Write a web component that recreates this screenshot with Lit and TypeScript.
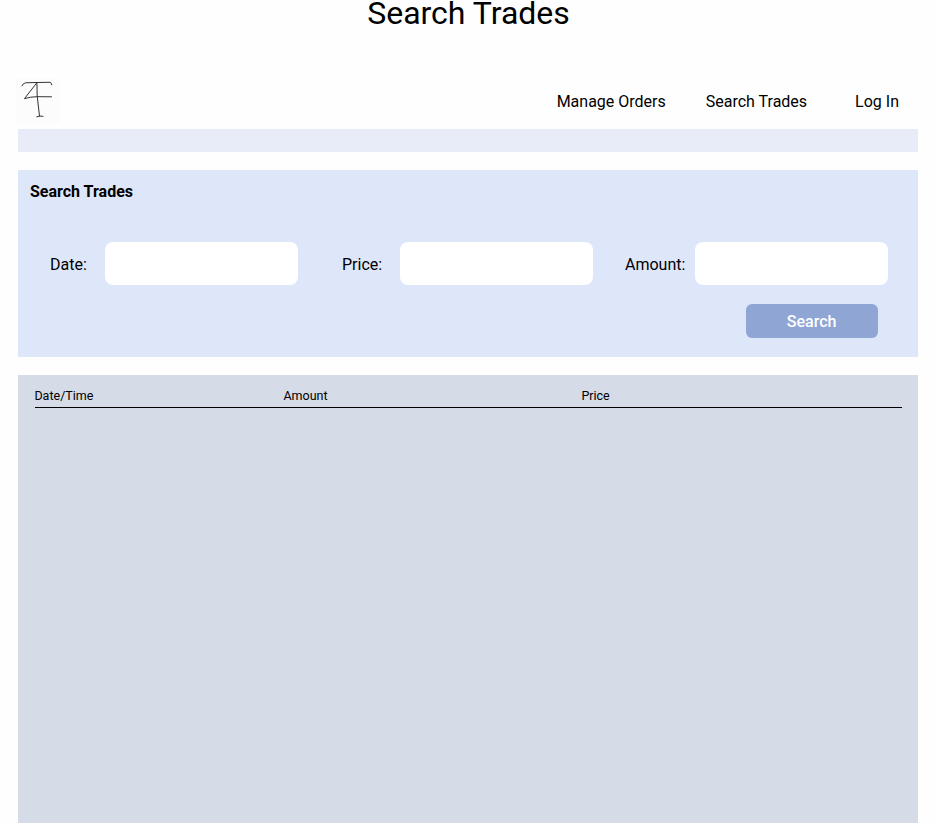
import { LitElement, html, css, svg } from "lit";
import { customElement, property } from "lit/decorators.js";

const logo = svg`
  <svg class="logo" viewBox="0 0 44 45" width="44" height="45" fill="none" stroke="#333" stroke-linecap="round" stroke-linejoin="round">
    <rect width="44" height="45" fill="#fcfcfc" stroke="none" />
    <path stroke-width="1" d="M6 7.8 Q7 5.2 9.5 4.8 L20 4.5 L34 4.3 Q36 5 35.8 6.8" />
    <path stroke-width="1" d="M20.8 4.8 L8.5 20.6 Q14 18.8 21 18.7 L35.5 18.8" />
    <path stroke-width="1" d="M20.9 5 L21.2 18 L23.5 38 M20.8 38.8 Q24 37.3 27 38.3" />
  </svg>`;

@customElement("trade-field")
export class TradeField extends LitElement {
  @property() label = "";

  static styles = css`
    :host { display: block; }
    .field { display: flex; align-items: center; justify-content: space-between; }
    .text { padding-top: 3px; }
    .input {
      box-sizing: border-box;
      width: 193px;
      height: 43.4px;
      margin: 0;
      padding: 0 12px;
      border: 0;
      border-radius: 8px;
      background: #fff;
      font: inherit;
    }
  `;

  render() {
    return html`<label class="field"><span class="text">${this.label}:</span><input class="input" /></label>`;
  }
}

@customElement("app-root")
export class AppRoot extends LitElement {
  static styles = css`
    :host {
      display: flex;
      flex-direction: column;
      box-sizing: border-box;
      height: 823px;
      padding: 0 17px 0 18px;
      overflow: hidden;
      background: #fefefe;
      color: #000;
      font: 16px/20px Roboto, sans-serif;
    }
    .title {
      flex: none;
      height: 79px;
      margin: 0;
      padding-left: 1px;
      font-size: 32px;
      font-weight: 400;
      line-height: 26px;
      text-align: center;
    }
    .header { display: flex; flex: none; justify-content: space-between; height: 50px; }
    .logo { display: block; margin-left: -2px; margin-top: -1px; }
    .nav { display: flex; padding: 13px 19px 0 0; }
    .link { color: inherit; text-decoration: none; white-space: nowrap; }
    .link + .link { margin-left: 40px; }
    .link:last-child { margin-left: 48px; }
    .strip { flex: none; height: 23px; background: #e8ecf8; }
    .search {
      display: flex;
      flex: none;
      flex-direction: column;
      box-sizing: border-box;
      height: 187px;
      margin: 18px 0;
      padding: 12px 30px 0 12px;
      background: #dee6fa;
    }
    .heading { margin: 0 0 39.8px; font-size: 16px; font-weight: 700; line-height: 20px; }
    .fields { display: grid; grid-template-columns: 248px 251px 263px; column-gap: 44px; padding-left: 20px; }
    .fields > :last-child { margin-left: -12px; margin-right: 12px; }
    .button {
      align-self: flex-end;
      width: 132px;
      height: 34px;
      margin: 18.8px 10.4px 0 0;
      padding: 2px 0 0;
      border: 0;
      border-radius: 6px;
      background: #8fa6d5;
      color: #fff;
      font: 500 16px/20px Roboto, sans-serif;
    }
    .results { flex: 1; padding: 11px 16px 0 17px; background: #d5dbe7; }
    .columns {
      display: grid;
      grid-template-columns: 249px 298px 1fr;
      height: 21px;
      border-bottom: 1px solid #000;
      font-size: 12.5px;
      line-height: 20px;
    }
    .column { margin-left: -0.6px; }
  `;

  render() {
    return html`
      <h1 class="title">Search Trades</h1>
      <header class="header">
        ${logo}
        <nav class="nav">
          ${["Manage Orders", "Search Trades", "Log In"].map(
            (text) => html`<a class="link" href="#">${text}</a>`
          )}
        </nav>
      </header>
      <div class="strip"></div>
      <section class="search">
        <h2 class="heading">Search Trades</h2>
        <div class="fields">
          ${["Date", "Price", "Amount"].map(
            (label) => html`<trade-field label=${label}></trade-field>`
          )}
        </div>
        <button class="button">Search</button>
      </section>
      <section class="results">
        <div class="columns">
          ${["Date/Time", "Amount", "Price"].map((name) => html`<span class="column">${name}</span>`)}
        </div>
      </section>
    `;
  }
}
